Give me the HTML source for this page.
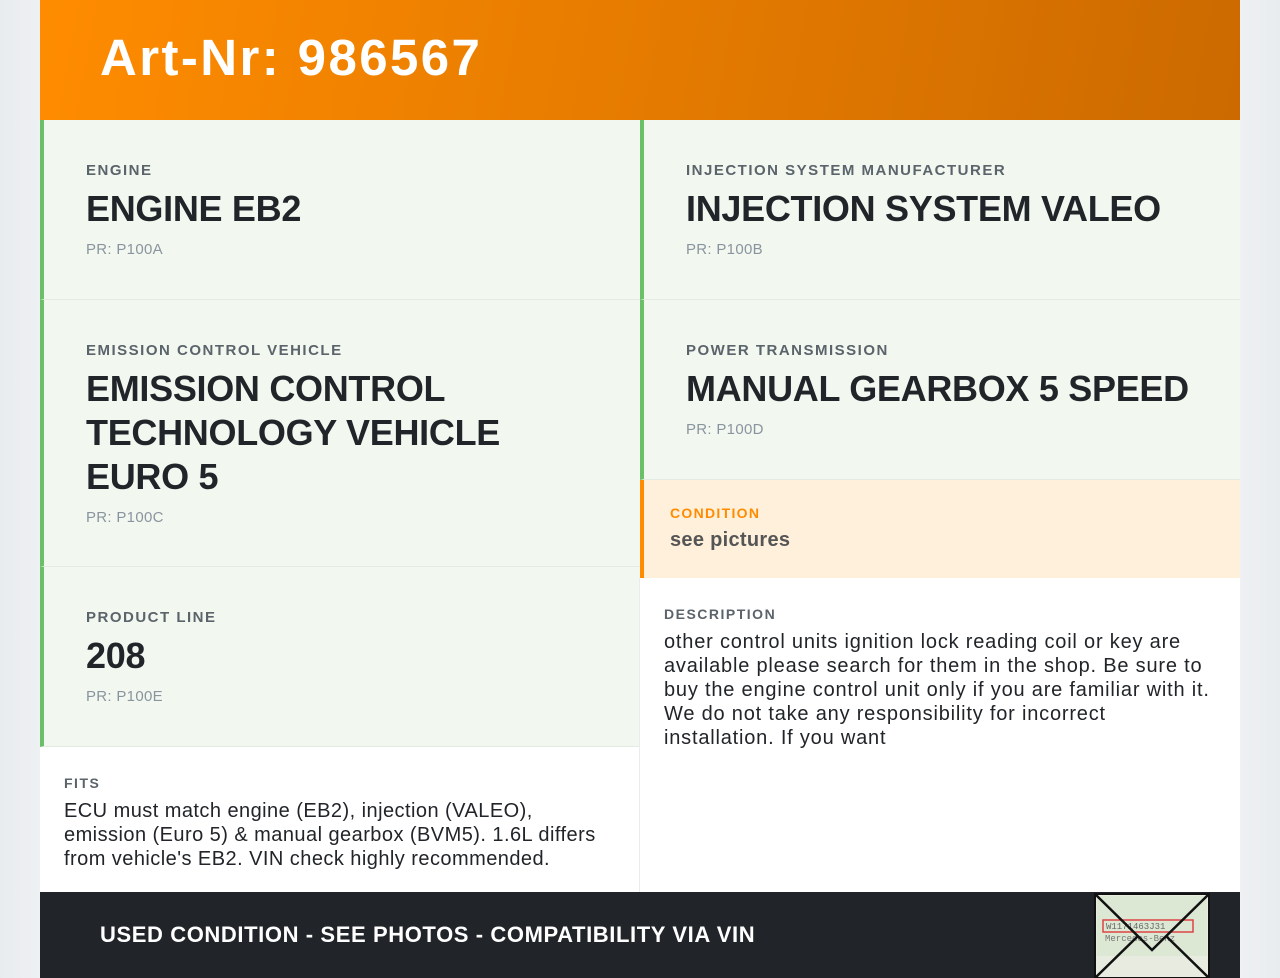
<!DOCTYPE html>
<html><head><style>
*{margin:0;padding:0;box-sizing:border-box}
body{width:1280px;height:978px;background:linear-gradient(90deg,#e9ecef,#f8f9fa 10%,#f8f9fa 90%,#e9ecef);font-family:"Liberation Sans",sans-serif;overflow:hidden;position:relative}
.wrap{position:absolute;left:40px;top:0;width:1200px;height:978px;background:#fff}
.hd{height:120px;background:linear-gradient(100deg,#ff8c00,#cc6a00);color:#fff;font-weight:bold;font-size:51px;letter-spacing:2.4px;padding:28px 0 0 60px}
.cell{position:absolute;background:#f2f8f0;border-left:4px solid #6abf69;border-bottom:1px solid #e3ebe3;padding:42px 0 0 42px;width:600px}
.lb{font-size:15px;font-weight:bold;letter-spacing:1.5px;color:#5b636b}
.tt{font-size:36px;font-weight:bold;color:#212529;line-height:44px;margin-top:8px;letter-spacing:-0.3px}
.pr{font-size:15px;color:#8a949e;margin-top:10px;letter-spacing:0.3px}
.txt{position:absolute;padding:0 24px;font-size:20px;color:#212529;line-height:24px;letter-spacing:0.8px}
.txt .l{font-size:14px;font-weight:bold;letter-spacing:1.5px;color:#5b636b;margin-bottom:4px}
.ft{position:absolute;left:0;top:892px;width:1200px;height:86px;background:#212529;color:#fff;font-weight:bold;font-size:22px;letter-spacing:0.6px;padding:30px 0 0 60px}
</style></head><body>
<div class="wrap">
<div class="hd">Art-Nr: 986567</div>
<div class="cell" style="left:0;top:120px;height:180px"><div class="lb">ENGINE</div><div class="tt">ENGINE EB2</div><div class="pr">PR: P100A</div></div>
<div class="cell" style="left:0;top:300px;height:267px"><div class="lb">EMISSION CONTROL VEHICLE</div><div class="tt" style="width:440px">EMISSION CONTROL TECHNOLOGY VEHICLE EURO 5</div><div class="pr">PR: P100C</div></div>
<div class="cell" style="left:0;top:567px;height:180px"><div class="lb">PRODUCT LINE</div><div class="tt">208</div><div class="pr">PR: P100E</div></div>
<div class="cell" style="left:600px;top:120px;height:180px"><div class="lb">INJECTION SYSTEM MANUFACTURER</div><div class="tt">INJECTION SYSTEM VALEO</div><div class="pr">PR: P100B</div></div>
<div class="cell" style="left:600px;top:300px;height:180px"><div class="lb">POWER TRANSMISSION</div><div class="tt">MANUAL GEARBOX 5 SPEED</div><div class="pr">PR: P100D</div></div>
<div style="position:absolute;left:600px;top:480px;width:600px;height:98px;background:#fff0dc;border-left:4px solid #ff8c00;padding:25px 0 0 26px"><div style="font-size:14px;font-weight:bold;letter-spacing:1.3px;color:#ff8c00">CONDITION</div><div style="font-size:20px;color:#555;margin-top:8px;font-weight:bold;letter-spacing:0.3px">see pictures</div></div>
<div class="txt" style="left:600px;top:602px;width:600px"><div class="l">DESCRIPTION</div><div style="width:552px">other control units ignition lock reading coil or key are available please search for them in the shop. Be sure to buy the engine control unit only if you are familiar with it. We do not take any responsibility for incorrect installation. If you want</div></div>
<div class="txt" style="left:0;top:771px;width:600px;letter-spacing:0.45px"><div class="l">FITS</div><div style="width:545px">ECU must match engine (EB2), injection (VALEO), emission (Euro 5) &amp; manual gearbox (BVM5). 1.6L differs from vehicle's EB2. VIN check highly recommended.</div></div>
<div style="position:absolute;left:599px;top:578px;width:1px;height:314px;background:#e9ecef"></div>
<div class="ft">USED CONDITION - SEE PHOTOS - COMPATIBILITY VIA VIN</div>
<svg style="position:absolute;left:1053px;top:892px" width="118" height="86" viewBox="0 0 118 86"><rect x="2" y="2" width="114" height="84" fill="#e8ebe0" stroke="#111" stroke-width="2"/><rect x="4" y="4" width="110" height="60" fill="#dce8d4"/><rect x="10" y="28" width="90" height="12" fill="none" stroke="#d44" stroke-width="1.5"/><text x="13" y="37" font-size="9" font-family="Liberation Mono" fill="#666">W1171463J31</text><text x="12" y="49" font-size="9" font-family="Liberation Mono" fill="#777">Mercedes-Benz</text><path d="M2 2 L59 58 L116 2 M2 86 L45 44 M116 86 L73 44" stroke="#111" stroke-width="2.5" fill="none"/></svg>
</div>
</body></html>
